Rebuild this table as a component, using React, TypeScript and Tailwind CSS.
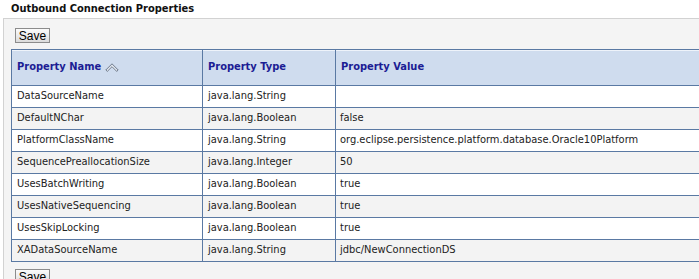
import React from 'react';

type Row = { name: string; type: string; value: string };

const rows: Row[] = [
  { name: 'DataSourceName', type: 'java.lang.String', value: '' },
  { name: 'DefaultNChar', type: 'java.lang.Boolean', value: 'false' },
  {
    name: 'PlatformClassName',
    type: 'java.lang.String',
    value: 'org.eclipse.persistence.platform.database.Oracle10Platform',
  },
  { name: 'SequencePreallocationSize', type: 'java.lang.Integer', value: '50' },
  { name: 'UsesBatchWriting', type: 'java.lang.Boolean', value: 'true' },
  { name: 'UsesNativeSequencing', type: 'java.lang.Boolean', value: 'true' },
  { name: 'UsesSkipLocking', type: 'java.lang.Boolean', value: 'true' },
  { name: 'XADataSourceName', type: 'java.lang.String', value: 'jdbc/NewConnectionDS' },
];

const SaveButton: React.FC = () => (
  <button className="h-[15px] w-[35px] border border-[#8c8c8c] bg-gradient-to-b from-[#fbfbfb] to-[#dcdcdc] text-[12px] leading-[12px] text-black font-['Liberation_Sans',sans-serif]">
    Save
  </button>
);

const SortIcon: React.FC = () => (
  <svg width="14" height="9" viewBox="0 0 14 9" className="ml-[4px] inline-block">
    <path d="M7 0.8 L13.2 7 L11.6 8.4 L7 3.8 L2.4 8.4 L0.8 7 Z" fill="#dfe4ec" stroke="#6f7b8c" strokeWidth="1" />
    <path d="M7 3.8 L11.6 8.4 M7 3.8 L2.4 8.4" stroke="#9aa5b4" strokeWidth="0.8" />
  </svg>
);

export default function App() {
  return (
    <div className="h-[279px] w-[699px] overflow-hidden bg-white font-['DejaVu_Sans_Condensed','DejaVu_Sans',sans-serif] text-[11px] text-[#222]">
      <div className="h-[18px] pl-[11px] pt-[2px] text-[11px] font-bold leading-[14px] text-[#111]">
        Outbound Connection Properties
      </div>
      <div className="ml-[3px] h-[261px] border-l border-t border-[#d2d2d2] bg-[#f4f4f4] pl-[7px]">
        <div className="pl-[4px] pt-[9px]">
          <SaveButton />
        </div>
        <div className="mt-[4px] w-[730px]">
          <table className="w-full border-collapse">
            <thead>
              <tr className="bg-[#cfdcee] text-left text-[11px] font-bold text-[#1c1c94]">
                <th className="h-[36px] w-[191px] border border-[#5a79a3] pl-[5px] align-middle shadow-[inset_0_1px_0_#eef3fa]">
                  <span className="inline-flex items-center">
                    Property Name
                    <SortIcon />
                  </span>
                </th>
                <th className="h-[36px] w-[133px] border border-[#5a79a3] pl-[5px] align-middle shadow-[inset_0_1px_0_#eef3fa]">
                  Property Type
                </th>
                <th className="h-[36px] border border-[#5a79a3] pl-[5px] align-middle shadow-[inset_0_1px_0_#eef3fa]">
                  Property Value
                </th>
              </tr>
            </thead>
            <tbody>
              {rows.map((r, i) => (
                <tr key={r.name} className={i % 2 === 1 ? 'bg-[#f3f3f3]' : 'bg-white'}>
                  <td className="h-[22px] border border-[#5a79a3] pl-[5px]">{r.name}</td>
                  <td className="h-[22px] border border-[#5a79a3] pl-[5px]">{r.type}</td>
                  <td className="h-[22px] border border-[#5a79a3] pl-[4px]">{r.value}</td>
                </tr>
              ))}
            </tbody>
          </table>
        </div>
        <div className="pl-[4px] pt-[7px]">
          <SaveButton />
        </div>
      </div>
    </div>
  );
}
